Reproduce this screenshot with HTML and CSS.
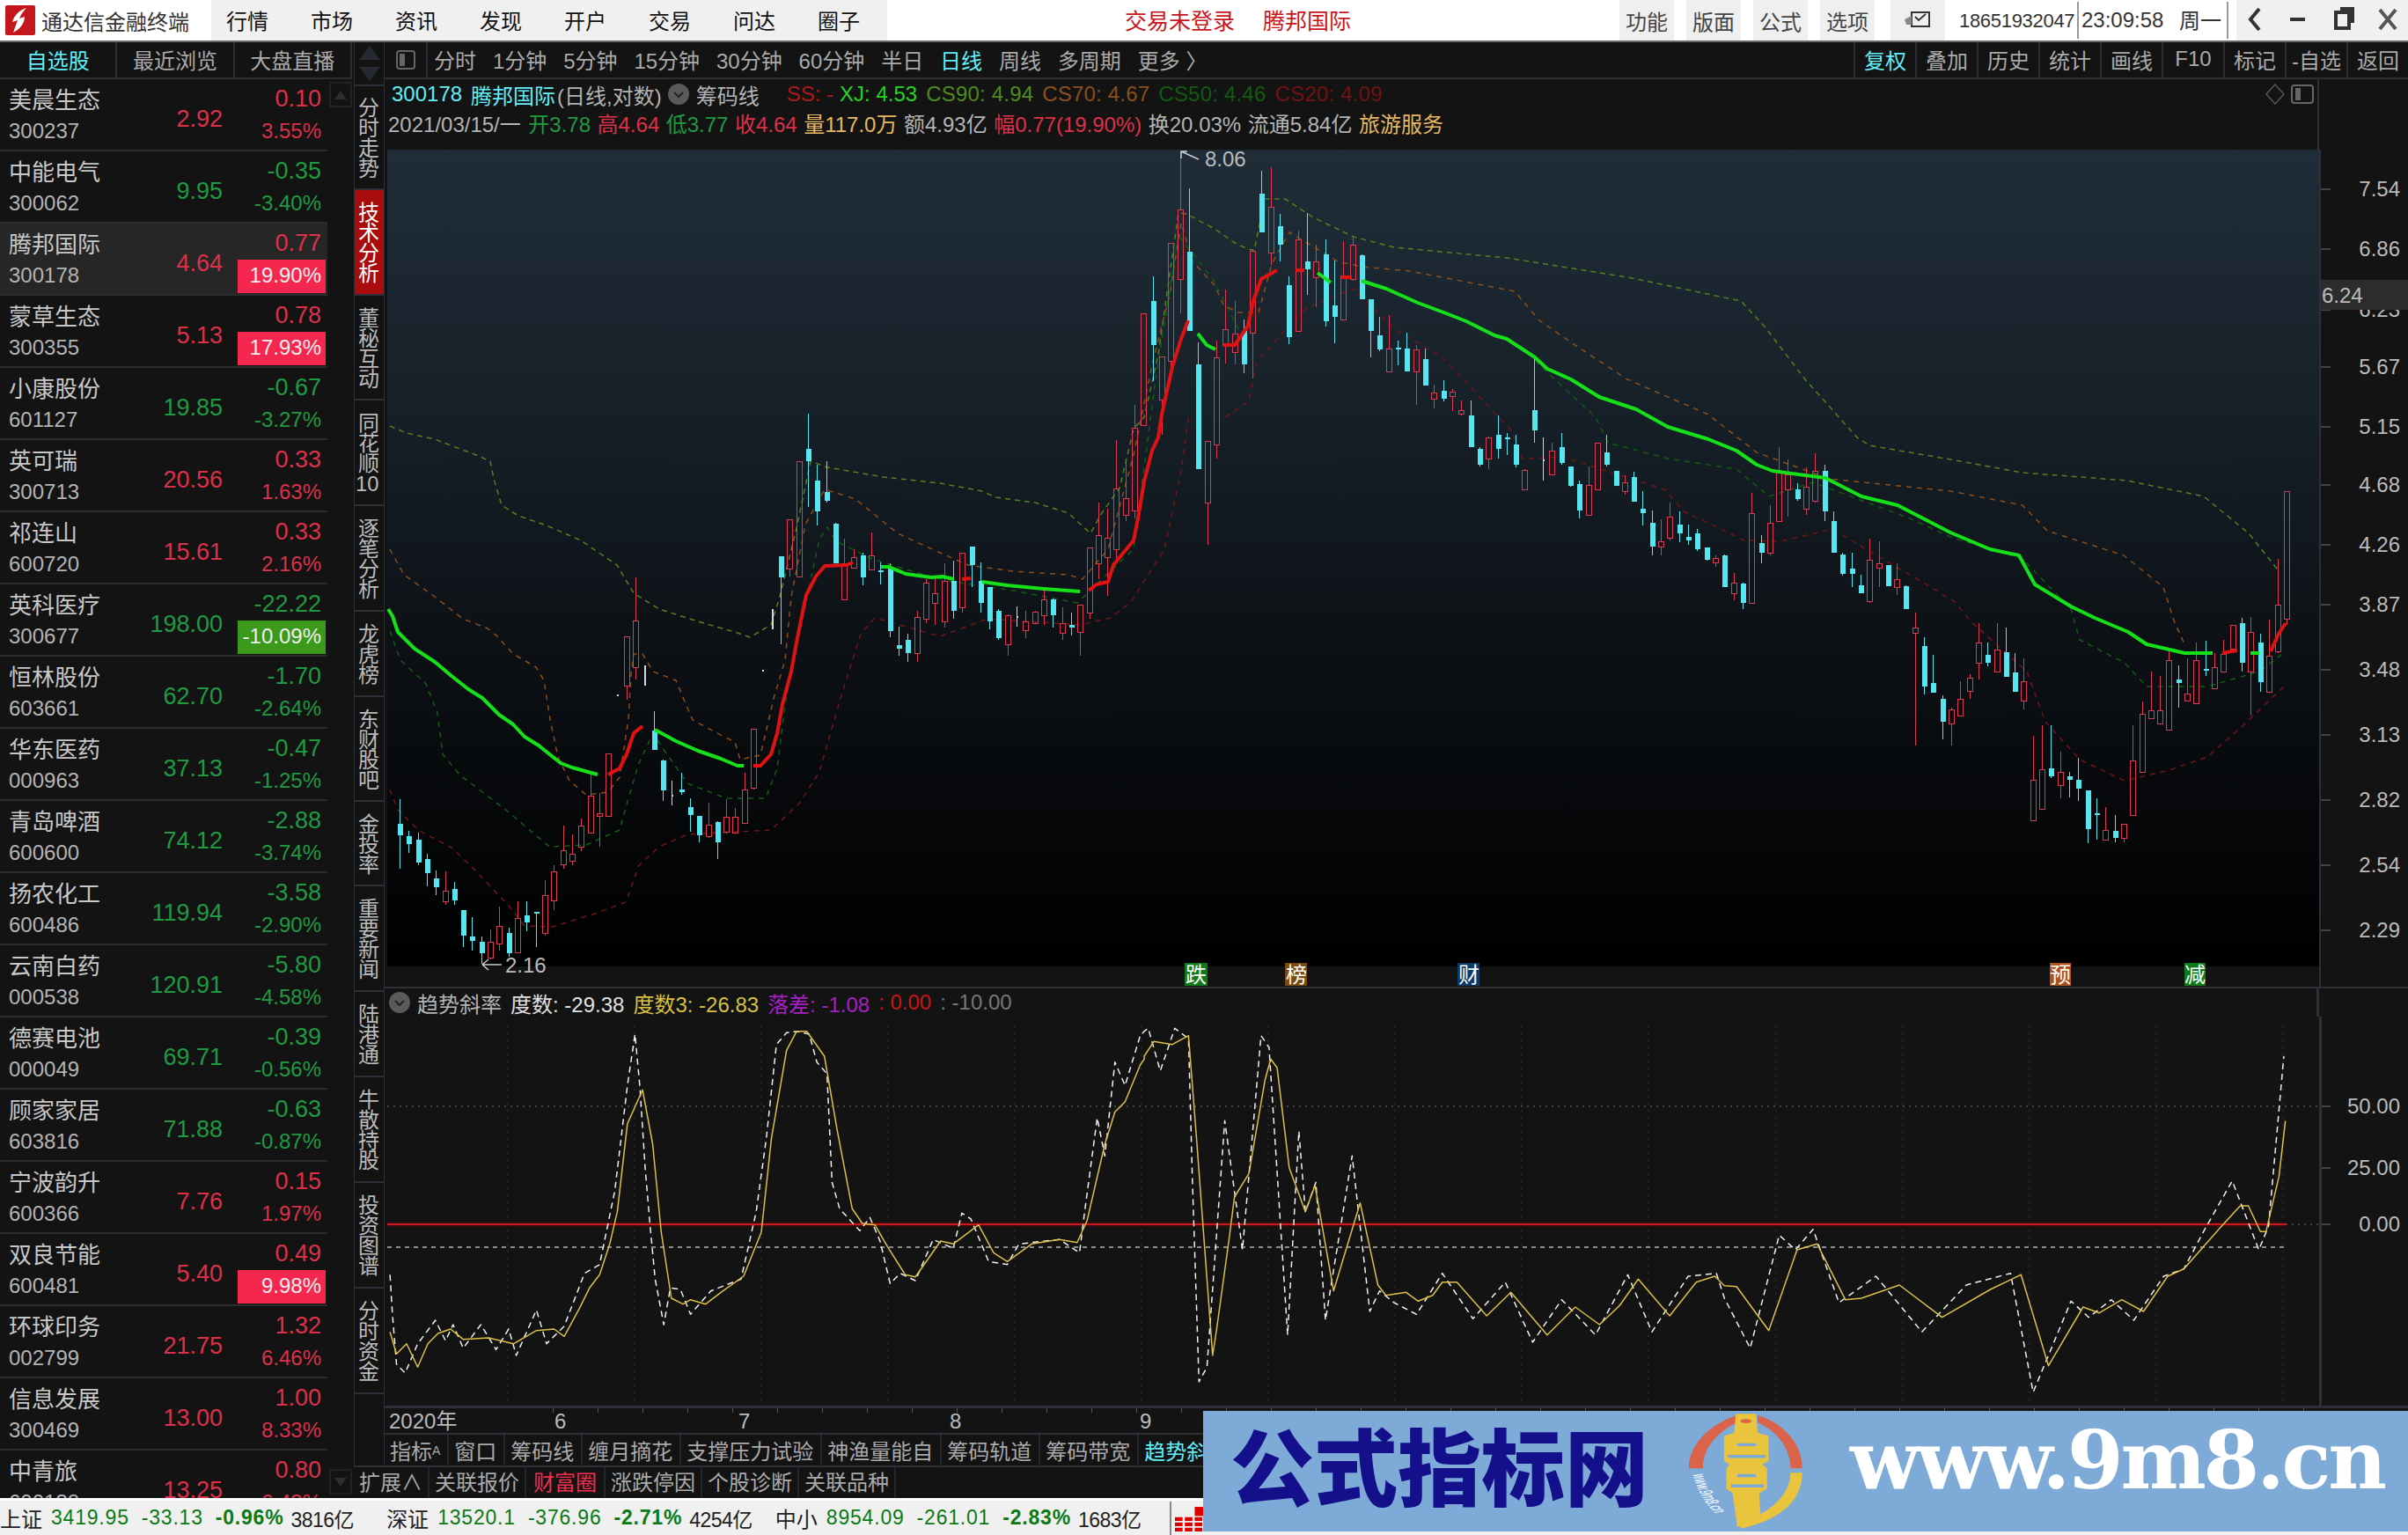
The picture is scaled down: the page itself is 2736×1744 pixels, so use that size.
FILE: index.html
```html
<!DOCTYPE html>
<html lang="zh">
<head>
<meta charset="utf-8">
<title>通达信金融终端</title>
<link rel="stylesheet" href="styles.css">
</head>
<body>
<div class="app">
  <header class="titlebar">
    <div class="brand">
      <svg class="logo" viewBox="0 0 34 34"><rect width="34" height="34" rx="2" fill="#c4161c"/><path d="M24 3 C15 6 10 12 8 19 L14 17 L9 31 C17 27 22 20 22 13 L16 15 C18 10 21 6 24 3Z" fill="#fff"/></svg>
      <span class="brand-name">通达信金融终端</span>
    </div>
    <nav class="menu"><span>行情</span><span>市场</span><span>资讯</span><span>发现</span><span>开户</span><span>交易</span><span>问达</span><span>圈子</span></nav>
    <div class="title-center"><span>交易未登录</span><span>腾邦国际</span></div>
    <div class="tools"><span class="tbtn">功能</span><span class="tbtn">版面</span><span class="tbtn">公式</span><span class="tbtn">选项</span>
      <span class="tbtn mail"><svg width="34" height="26" viewBox="0 0 34 26"><path d="M10 4 H30 V20 H10 Z" fill="none" stroke="#333" stroke-width="2"/><path d="M14 9 L18 13 L26 6" fill="none" stroke="#333" stroke-width="2"/><path d="M2 12 L10 8 V18 H4 Z" fill="#888"/></svg></span>
    </div>
    <div class="clock"><span class="phone">18651932047</span><span class="time">23:09:58</span><span class="week">周一</span></div>
    <div class="winbtns">
      <svg width="195" height="46" viewBox="0 0 195 46"><path d="M26 10 L16 22 L26 34" fill="none" stroke="#333" stroke-width="4"/><rect x="61" y="20" width="17" height="4" fill="#333"/><rect x="113" y="14" width="15" height="18" fill="none" stroke="#333" stroke-width="4"/><path d="M118 10 H132 V26" fill="none" stroke="#333" stroke-width="4"/><path d="M163 11 L181 33 M181 11 L163 33" stroke="#555" stroke-width="4"/></svg>
    </div>
  </header>

  <main class="main">
    <section class="left">
      <div class="ltabs"><span class="on">自选股</span><span>最近浏览</span><span>大盘直播</span></div>
      <div class="listwrap">
        <div class="list">
          <div class="row"><div class="nm"><b>美晨生态</b><i>300237</i></div><div class="px up">2.92</div><div class="ch up"><b>0.10</b><i>3.55%</i></div></div>
          <div class="row"><div class="nm"><b>中能电气</b><i>300062</i></div><div class="px dn">9.95</div><div class="ch dn"><b>-0.35</b><i>-3.40%</i></div></div>
          <div class="row sel"><div class="nm"><b>腾邦国际</b><i>300178</i></div><div class="px up">4.64</div><div class="ch up"><b>0.77</b><i class="box-up">19.90%</i></div></div>
          <div class="row"><div class="nm"><b>蒙草生态</b><i>300355</i></div><div class="px up">5.13</div><div class="ch up"><b>0.78</b><i class="box-up">17.93%</i></div></div>
          <div class="row"><div class="nm"><b>小康股份</b><i>601127</i></div><div class="px dn">19.85</div><div class="ch dn"><b>-0.67</b><i>-3.27%</i></div></div>
          <div class="row"><div class="nm"><b>英可瑞</b><i>300713</i></div><div class="px up">20.56</div><div class="ch up"><b>0.33</b><i>1.63%</i></div></div>
          <div class="row"><div class="nm"><b>祁连山</b><i>600720</i></div><div class="px up">15.61</div><div class="ch up"><b>0.33</b><i>2.16%</i></div></div>
          <div class="row"><div class="nm"><b>英科医疗</b><i>300677</i></div><div class="px dn">198.00</div><div class="ch dn"><b>-22.22</b><i class="box-dn">-10.09%</i></div></div>
          <div class="row"><div class="nm"><b>恒林股份</b><i>603661</i></div><div class="px dn">62.70</div><div class="ch dn"><b>-1.70</b><i>-2.64%</i></div></div>
          <div class="row"><div class="nm"><b>华东医药</b><i>000963</i></div><div class="px dn">37.13</div><div class="ch dn"><b>-0.47</b><i>-1.25%</i></div></div>
          <div class="row"><div class="nm"><b>青岛啤酒</b><i>600600</i></div><div class="px dn">74.12</div><div class="ch dn"><b>-2.88</b><i>-3.74%</i></div></div>
          <div class="row"><div class="nm"><b>扬农化工</b><i>600486</i></div><div class="px dn">119.94</div><div class="ch dn"><b>-3.58</b><i>-2.90%</i></div></div>
          <div class="row"><div class="nm"><b>云南白药</b><i>000538</i></div><div class="px dn">120.91</div><div class="ch dn"><b>-5.80</b><i>-4.58%</i></div></div>
          <div class="row"><div class="nm"><b>德赛电池</b><i>000049</i></div><div class="px dn">69.71</div><div class="ch dn"><b>-0.39</b><i>-0.56%</i></div></div>
          <div class="row"><div class="nm"><b>顾家家居</b><i>603816</i></div><div class="px dn">71.88</div><div class="ch dn"><b>-0.63</b><i>-0.87%</i></div></div>
          <div class="row"><div class="nm"><b>宁波韵升</b><i>600366</i></div><div class="px up">7.76</div><div class="ch up"><b>0.15</b><i>1.97%</i></div></div>
          <div class="row"><div class="nm"><b>双良节能</b><i>600481</i></div><div class="px up">5.40</div><div class="ch up"><b>0.49</b><i class="box-up">9.98%</i></div></div>
          <div class="row"><div class="nm"><b>环球印务</b><i>002799</i></div><div class="px up">21.75</div><div class="ch up"><b>1.32</b><i>6.46%</i></div></div>
          <div class="row"><div class="nm"><b>信息发展</b><i>300469</i></div><div class="px up">13.00</div><div class="ch up"><b>1.00</b><i>8.33%</i></div></div>
          <div class="row"><div class="nm"><b>中青旅</b><i>600138</i></div><div class="px up">13.25</div><div class="ch up"><b>0.80</b><i>6.43%</i></div></div>
        </div>
        <div class="scroll">
          <div class="sbtn"><svg width="20" height="14" viewBox="0 0 20 14"><path d="M10 2 L17 12 H3 Z" fill="#2e2e2e"/></svg></div>
          <div class="sbtn"><svg width="20" height="14" viewBox="0 0 20 14"><path d="M10 12 L17 2 H3 Z" fill="#2e2e2e"/></svg></div>
        </div>
      </div>
    </section>

    <section class="rightwrap">
      <div class="upper">
        <aside class="side">
          <div class="arrows"><svg width="30" height="44" viewBox="0 0 30 44"><path d="M15 2 L27 18 H3 Z" fill="#262a30"/><path d="M15 42 L27 26 H3 Z" fill="#262a30"/></svg></div>
          <div class="vt t118">分时走势</div>
          <div class="vt t120 on">技术分析</div>
          <div class="vt t119">董秘互动</div>
          <div class="vt t120">同花顺<span class="tcy">10</span></div>
          <div class="vt t120">逐笔分析</div>
          <div class="vt t97">龙虎榜</div>
          <div class="vt t119">东财股吧</div>
          <div class="vt t96">金投率</div>
          <div class="vt t120">重要新闻</div>
          <div class="vt t97">陆港通</div>
          <div class="vt t120">牛散持股</div>
          <div class="vt t120">投资图谱</div>
          <div class="vt t120">分时资金</div>
        </aside>
        <div class="content">
          <div class="toolbar">
            <div class="tb-icon"><svg class="panelico" width="22" height="22" viewBox="0 0 22 22"><rect x="1" y="1" width="20" height="20" rx="3" fill="none" stroke="#666" stroke-width="2"/><rect x="4" y="4" width="6" height="14" fill="#666"/></svg></div>
            <div class="periods"><span>分时</span><span>1分钟</span><span>5分钟</span><span>15分钟</span><span>30分钟</span><span>60分钟</span><span>半日</span><span class="cy">日线</span><span>周线</span><span>多周期</span><span>更多 〉</span></div>
            <div class="rtools"><span class="cy">复权</span><span>叠加</span><span>历史</span><span>统计</span><span>画线</span><span>F10</span><span>标记</span><span>-自选</span><span>返回</span></div>
          </div>
          <div class="info">
            <div class="inf inf1">
              <span class="cy">300178</span><span class="cy m1">腾邦国际</span><span class="gr">(日线,对数)</span>
              <svg class="circ" width="24" height="24" viewBox="0 0 24 24"><circle cx="12" cy="12" r="12" fill="#5a5a5a"/><path d="M7 10 L12 15 L17 10" fill="none" stroke="#222" stroke-width="2"/></svg>
              <span class="gr">筹码线</span>
              <span class="c-ss">SS: -</span><span class="c-xj">XJ: 4.53</span><span class="c-90">CS90: 4.94</span><span class="c-70">CS70: 4.67</span><span class="c-50">CS50: 4.46</span><span class="c-20">CS20: 4.09</span>
              <span class="inf-ico"><svg width="56" height="24" viewBox="0 0 56 24"><path d="M12 1 L22 12 L12 23 L2 12 Z" fill="none" stroke="#555" stroke-width="1.5"/><rect x="31" y="2" width="24" height="20" rx="3" fill="none" stroke="#666" stroke-width="2"/><rect x="35" y="5" width="6" height="14" fill="#666"/></svg></span>
            </div>
            <div class="inf inf2">
              <span class="gr">2021/03/15/一</span><span class="dn2 m2">开3.78</span><span class="up2">高4.64</span><span class="dn2">低3.77</span><span class="up2">收4.64</span><span class="am">量117.0万</span><span class="gr">额4.93亿</span><span class="up2">幅0.77(19.90%)</span><span class="gr">换20.03%</span><span class="gr">流通5.84亿</span><span class="am">旅游服务</span>
            </div>
          </div>
          <svg id="price" class="pane" width="2299" height="953" viewBox="437 170 2299 953">
            <defs><linearGradient id="bg" x1="0" y1="0" x2="0" y2="1"><stop offset="0" stop-color="#202d38"/><stop offset=".3" stop-color="#17212a"/><stop offset=".6" stop-color="#0d1116"/><stop offset="1" stop-color="#000"/></linearGradient></defs>
            <rect x="440" y="170" width="2195" height="928" fill="url(#bg)"/>
            <rect x="437" y="1121" width="2299" height="2" fill="#2d3038"/>
            <rect x="2635" y="170" width="2" height="953" fill="#2d3038"/>
            <g id="pdash"></g><g id="pcandles"></g><g id="pma"></g>
            <path d="M1342 172 L1362 181 M1342 172 L1342 180 M1342 172 L1349 172" class="note"/>
            <text x="1369" y="189" class="lbl">8.06</text>
            <path d="M548 1096 H570 M548 1096 L555 1090 M548 1096 L555 1102" class="note"/>
            <text x="574" y="1105" class="lbl">2.16</text>
            <g class="tags">
              <rect x="1346" y="1094" width="26" height="26" fill="#0f7a1a"/><text x="1347" y="1116">跌</text>
              <rect x="1460" y="1094" width="25" height="26" fill="#7a4a10"/><text x="1461" y="1116">榜</text>
              <rect x="1656" y="1094" width="25" height="26" fill="#0d3a66"/><text x="1657" y="1116">财</text>
              <rect x="2329" y="1094" width="24" height="26" fill="#b0501c"/><text x="2329" y="1116">预</text>
              <rect x="2482" y="1094" width="24" height="26" fill="#0f7a1a"/><text x="2482" y="1116">减</text>
            </g>
            <g class="axis">
              <text x="2727" y="223">7.54</text><text x="2727" y="291">6.86</text><text x="2727" y="360">6.23</text><text x="2727" y="425">5.67</text><text x="2727" y="493">5.15</text><text x="2727" y="559">4.68</text><text x="2727" y="627">4.26</text><text x="2727" y="695">3.87</text><text x="2727" y="769">3.48</text><text x="2727" y="843">3.13</text><text x="2727" y="917">2.82</text><text x="2727" y="991">2.54</text><text x="2727" y="1065">2.29</text>
            </g>
            <g id="pticks"></g>
            <rect x="2637" y="318" width="99" height="34" fill="#2c2c2e"/>
            <text x="2638" y="344" class="lbl">6.24</text>
          </svg>
          <div class="indhead">
            <svg width="24" height="24" viewBox="0 0 24 24"><circle cx="12" cy="12" r="12" fill="#5a5a5a"/><path d="M7 10 L12 15 L17 10" fill="none" stroke="#222" stroke-width="2"/></svg>
            <span class="gr">趋势斜率</span><span class="wh">度数: -29.38</span><span class="yl">度数3: -26.83</span><span class="pu">落差: -1.08</span><span class="rd">: 0.00</span><span class="g2">: -10.00</span>
          </div>
          <svg id="ind" class="pane" width="2299" height="475" viewBox="437 1155 2299 475">
            <rect x="2635" y="1155" width="3" height="445" fill="#2d3038"/>
            <g id="igrid"></g>
            <path d="M440 1417 H2597" class="zero"/>
            <path d="M440 1391 H2597" class="rline-h"/>
            <path d="M440 1391 H2597" class="rline"/>
            <g id="ilines"></g>
            <g class="axis"><text x="2727" y="1265">50.00</text><text x="2727" y="1335">25.00</text><text x="2727" y="1399">0.00</text></g>
            <rect x="437" y="1597" width="2299" height="3" fill="#2d3038"/>
            <rect x="437" y="1628" width="2299" height="2" fill="#2d3038"/>
            <g id="xticks"></g>
            <g class="xlab"><text x="442" y="1623">2020年</text><text x="630" y="1623">6</text><text x="839" y="1623">7</text><text x="1079" y="1623">8</text><text x="1295" y="1623">9</text></g>
          </svg>
          <div class="subtabs"><span>指标<small>A</small></span><span>窗口</span><span>筹码线</span><span>缠月摘花</span><span>支撑压力试验</span><span>神渔量能自</span><span>筹码轨道</span><span>筹码带宽</span><span class="cy">趋势斜率</span></div>
        </div>
      </div>
      <div class="ext"><span>扩展∧</span><span>关联报价</span><span class="hot">财富圈</span><span>涨跌停因</span><span>个股诊断</span><span>关联品种</span></div>
    </section>
  </main>

  <footer class="status">
    <div class="grp g1"><span class="k">上证</span><span class="v">3419.95</span><span class="v">-33.13</span><strong class="v">-0.96%</strong><span class="a">3816亿</span></div>
    <div class="grp g2nd"><span class="k">深证</span><span class="v">13520.1</span><span class="v">-376.96</span><strong class="v">-2.71%</strong><span class="a">4254亿</span></div>
    <div class="grp"><span class="k">中小</span><span class="v">8954.09</span><span class="v">-261.01</span><strong class="v">-2.83%</strong><span class="a">1683亿</span></div>
    <svg class="sticon" width="44" height="38" viewBox="0 0 44 38"><rect x="26" y="4" width="18" height="12" fill="#d00"/><path d="M0 20 H44 M0 27 H44 M0 34 H44" stroke="#d00" stroke-width="5" stroke-dasharray="10 3"/></svg>
  </footer>

  <div class="banner">
    <span class="wm-cn">公式指标网</span>
    <svg class="wm-logo" width="151" height="137" viewBox="640 130 170 410" preserveAspectRatio="none">
      <path d="M650 325 C650 240 680 170 712 145 L712 170 C690 195 668 250 668 325 Z M795 325 C795 240 770 170 738 145 L738 170 C760 195 780 250 780 325 Z" fill="#da634a"/>
      <path d="M795 340 C795 430 770 500 716 530 L716 505 C750 485 780 420 780 340 Z" fill="#e9c43c"/>
      <path d="M710 140 H736 L738 205 L752 215 V300 L744 312 L750 325 V395 L740 410 L742 500 L712 525 L706 410 L698 395 V325 L702 312 L695 300 V215 L708 205 Z" fill="#e9c43c"/>
      <path d="M712 240 H736 V250 H712 Z M700 280 H748 V290 H700 Z M712 345 H736 V355 H712 Z M704 380 H746 V390 H704 Z" fill="#7eaad8"/>
      <circle cx="723" cy="165" r="7" fill="#da634a"/>
      <path id="wmarc" d="M655 345 C662 420 680 480 705 525" fill="none"/>
      <text class="wm-mini"><textPath href="#wmarc">www.9m8.cn</textPath></text>
    </svg>
    <span class="wm-en">www.9m8.cn</span>
  </div>
</div>
<script src="app.js"></script>
</body>
</html>
```
FILE: styles.css
```css
* { box-sizing: border-box; }
html, body { margin: 0; padding: 0; background: #131313; }
body { font-family: "Liberation Sans", "Noto Sans CJK SC", sans-serif; font-size: 24px; color: #aaa; overflow: hidden; }
.app { position: relative; width: 2736px; height: 1744px; display: flex; flex-direction: column; }
.cy { color: #62eef8; }
.gr { color: #b4b4b4; }

/* title bar */
.titlebar { height: 48px; flex: none; background: #fff; border-bottom: 2px solid #6a6a6a; display: flex; color: #000; }
.brand { width: 240px; display: flex; align-items: center; padding-left: 6px; gap: 7px; }
.logo { width: 34px; height: 34px; }
.brand-name { font-size: 24px; color: #333; white-space: nowrap; }
.menu { width: 768px; background: #f0f0f0; display: flex; padding-left: 17px; gap: 48px; align-items: center; padding-bottom: 2px; font-size: 24px; color: #111; }
.title-center { width: 832px; display: flex; gap: 32px; padding-left: 270px; align-items: center; padding-bottom: 2px; color: #c8141c; font-size: 25px; }
.tools { display: flex; gap: 14px; margin-right: 16px; }
.tbtn { width: 62px; background: #efefef; display: flex; align-items: center; justify-content: center; font-size: 24px; color: #444; }
.mail { margin-left: 4px; }
.clock { width: 315px; display: flex; align-items: center; color: #333; }
.phone { font-size: 22px; letter-spacing: -.3px; width: 136px; padding-right: 4px; border-right: 2px solid #999; height: 42px; line-height: 44px; white-space: nowrap; }
.time { font-size: 24px; padding-left: 3px; width: 114px; white-space: nowrap; }
.week { width: 56px; height: 42px; line-height: 44px; border-right: 2px solid #999; }
.winbtns { width: 195px; background: #f0f0f0; height: 46px; margin-left: auto; }
.winbtns svg { display: block; }

/* layout */
.main { flex: none; height: 1654px; display: flex; }
.left { width: 402px; flex: none; display: flex; flex-direction: column; }
.ltabs { height: 42px; flex: none; display: flex; border-bottom: 2px solid #2c2e32; width: 400px; }
.ltabs span { width: 133.3px; display: flex; align-items: center; justify-content: center; padding-bottom: 2px; font-size: 24px; color: #aaa; border-right: 2px solid #2c2e32; }
.ltabs .on { color: #62eef8; }
.listwrap { flex: 1; display: flex; overflow: hidden; min-height: 0; }
.list { width: 372px; flex: none; }
.row { height: 82px; width: 372px; border-bottom: 2px solid #2c2c2e; display: grid; grid-template-columns: 168px 85px 119px; }
.row.sel { background: #262626; }
.nm { display: flex; flex-direction: column; padding-left: 10px; }
.nm b { font-weight: 400; font-size: 26px; color: #c8c8c8; height: 46px; line-height: 49px; white-space: nowrap; }
.nm i { font-style: normal; font-size: 24px; color: #b4b4b4; line-height: 26px; }
.px { font-size: 27px; text-align: right; align-self: center; margin-top: 10px; }
.ch { display: flex; flex-direction: column; align-items: flex-end; padding-right: 7px; }
.ch b { font-weight: 400; font-size: 27px; height: 41px; line-height: 44px; }
.ch i { font-style: normal; font-size: 24px; width: 100px; height: 38px; line-height: 36px; text-align: right; margin-right: -5px; padding-right: 5px; }
.up { color: #dd3049; }
.dn { color: #1f9a42; }
i.box-up { background: #f5274f; color: #eee; }
i.box-dn { background: #3b9a1b; color: #eee; }
.scroll { width: 28px; flex: none; margin-left: 2px; padding-top: 3px; display: flex; flex-direction: column; justify-content: space-between; padding-bottom: 4px; }
.sbtn { width: 26px; height: 29px; border: 2px solid #222; display: flex; align-items: center; justify-content: center; }

.rightwrap { flex: 1; display: flex; flex-direction: column; min-width: 0; }
.upper { height: 1617px; display: flex; flex: none; }
.side { width: 35px; flex: none; display: flex; flex-direction: column; border-left: 1px solid #2c2e32; border-right: 1px solid #2c2e32; }
.arrows { height: 50px; border-bottom: 2px solid #2d3038; display: flex; align-items: center; justify-content: center; }
.vt { writing-mode: vertical-rl; text-orientation: upright; font-size: 24px; line-height: 33px; color: #bbb; border-bottom: 2px solid #2d3038; display: flex; align-items: center; justify-content: center; padding-right: 5px; letter-spacing: -1px; white-space: nowrap; }
.tcy { text-combine-upright: all; }
.vt.on { background: #a80c0c; color: #fff; }
.t96 { height: 96px; } .t97 { height: 97px; } .t118 { height: 118px; } .t119 { height: 119px; } .t120 { height: 120px; }

.content { flex: 1; min-width: 0; display: flex; flex-direction: column; }
.toolbar { height: 42px; flex: none; display: flex; border-bottom: 2px solid #2c2e32; }
.tb-icon { width: 49px; border-right: 2px solid #2c2e32; display: flex; align-items: center; justify-content: center; }
.periods { display: flex; gap: 18.9px; align-items: center; padding-left: 7px; padding-bottom: 2px; color: #aaa; white-space: nowrap; }
.rtools { margin-left: auto; display: flex; }
.rtools span { width: 70px; border-left: 2px solid #2c2e32; display: flex; align-items: center; justify-content: center; padding-bottom: 2px; white-space: nowrap; color: #aaa; }
.rtools .cy { color: #62eef8; }
.info { height: 80px; flex: none; width: 2198px; border-right: 2px solid #2d3038; display: flex; flex-direction: column; padding-top: 1px; }
.inf { display: flex; align-items: center; white-space: nowrap; height: 32px; }
.inf1 { padding-left: 8px; gap: 10px; }
.inf1 .m1 { margin-right: -8px; }
.circ { margin-left: -3px; margin-right: -2px; }
.c-ss { color: #b01818; margin-left: 21px; margin-right: -3px; }
.c-xj { color: #22d622; }
.c-90 { color: #4e8a1e; letter-spacing: .2px; }
.c-70 { color: #8a4f1a; letter-spacing: .2px; }
.c-50 { color: #0f5c0f; letter-spacing: .2px; }
.c-20 { color: #6e1212; letter-spacing: .2px; }
.inf-ico { margin-left: auto; margin-right: 4px; display: flex; }
.inf2 { padding-left: 4px; gap: 7.5px; }
.m2 { margin-left: 1px; }
.dn2 { color: #1f9a42; }
.up2 { color: #dd3049; }
.am { color: #e8b860; }
.pane { display: block; flex: none; }
.lbl { fill: #bbb; font-size: 24px; }
.note { fill: none; stroke: #ccc; stroke-width: 1.5; }
.tags text { fill: #fff; font-size: 24px; }
.axis text { fill: #bbb; font-size: 24px; text-anchor: end; }
.xlab text { fill: #bbb; font-size: 24px; }
.indhead { height: 32px; flex: none; width: 2198px; border-right: 3px solid #2d3038; display: flex; align-items: center; gap: 10px; padding-left: 5px; white-space: nowrap; }
.indhead .gr { margin-left: -2px; }
.wh { color: #e0e0e0; } .yl { color: #d8c040; } .pu { color: #a420c4; } .rd { color: #c81414; } .g2 { color: #777; }
.zero { stroke: #8a8a8a; stroke-width: 2; stroke-dasharray: 5 5; fill: none; }
.rline { stroke: #c81a1e; stroke-width: 2; fill: none; }
.rline-h { stroke: #3a0c0c; stroke-width: 5; fill: none; }
.subtabs { height: 35px; flex: none; display: flex; align-items: center; background: #131313; white-space: nowrap; color: #aaa; }
.subtabs span { height: 100%; display: flex; align-items: center; padding: 0 8px 0 6px; border-right: 2px solid #24262a; }
.subtabs small { font-size: 14px; }
.ext { height: 37px; flex: none; display: flex; align-items: center; white-space: nowrap; border-top: 2px solid #2d3038; }
.ext span { height: 100%; display: flex; align-items: center; padding: 0 6px 4px; border-right: 2px solid #24262a; color: #aaa; }
.ext .hot { color: #f0304e; padding: 0 8px 4px; }

/* status */
.status { height: 42px; flex: none; background: #f0f0f0; border-top: 3px solid #fff; display: flex; align-items: center; font-size: 24px; color: #222; white-space: nowrap; }
.grp { display: flex; gap: 14px; align-items: center; margin-right: 26px; }
.g1 { margin-right: 37px; }
.grp .k { margin-right: -4px; }
.grp .v { color: #0a7a14; font-size: 23px; letter-spacing: .8px; }
.grp .a { font-size: 23px; margin-left: -6px; letter-spacing: -.5px; }
.sticon { margin-left: 6px; border-left: 2px solid #888; padding-left: 4px; }

/* watermark */
.banner { position: absolute; left: 1367px; top: 1603px; width: 1369px; height: 137px; background: #7eaad8; display: flex; align-items: center; overflow: hidden; }
.wm-cn { font-family: "Noto Sans CJK SC", sans-serif; font-weight: 900; font-size: 95px; color: #14108c; margin-left: 31px; white-space: nowrap; line-height: 119px; padding-bottom: 18px; width: 512px; flex: none; }
.wm-logo { flex: none; }
.wm-mini { fill: #fff; font-size: 24px; }
.wm-en { font-family: "DejaVu Serif", serif; font-weight: 700; font-size: 92px; color: #fff; letter-spacing: -3.4px; margin-left: 41px; white-space: nowrap; line-height: 113px; padding-bottom: 24px; }
```
FILE: app.js
```js
var NS = 'http://www.w3.org/2000/svg';
function el(parent, tag, attrs) {
  var e = document.createElementNS(NS, tag);
  for (var k in attrs) e.setAttribute(k, attrs[k]);
  parent.appendChild(e);
  return e;
}
function poly(parent, pts, color, width, dash) {
  var a = { points: pts.map(function (p) { return p[0].toFixed(1) + ',' + p[1].toFixed(1); }).join(' '), fill: 'none', stroke: color, 'stroke-width': width, 'stroke-linejoin': 'round' };
  if (dash) a['stroke-dasharray'] = dash;
  el(parent, 'polyline', a);
}

/* candles: colour, high, body top, body bottom, low */
var C = [
"c 908 936 949 987","c 944 950 959 969","c 946 954 980 983","c 970 976 992 1007","c 989 998 1008 1017","r 990 1012 1024 1028","c 1002 1010 1023 1028","c 1034 1034 1063 1076","c 1042 1064 1069 1080","c 1064 1070 1083 1095",
"r 1056 1070 1088 1090","r 1030 1052 1072 1080","c 1054 1060 1083 1087","r 1024 1043 1082 1083","c 1024 1040 1048 1058","c 1036 1036 1038 1076","r 1000 1017 1060 1063","r 983 990 1023 1034","r 938 966 982 987","r 948 970 978 983",
"r 930 938 962 967","r 880 904 946 946","r 901 924 927 962","r 856 856 927 927","w 789 789 791 791","r 723 723 779 795","r 656 705 758 772","w 756 756 779 779","c 808 830 852 852","c 863 864 898 910",
"w 887 903 904 915","c 878 897 900 903","c 907 917 926 945","c 927 927 949 957","r 912 937 950 952","c 933 934 957 976","r 908 928 945 947","r 918 928 946 947","r 878 897 935 936","r 828 828 895 897",
"w 761 761 763 763","w 692 692 715 715","c 632 632 656 732","r 590 590 646 655","r 524 524 655 655","c 470 510 524 576","c 528 546 581 597","c 524 559 569 571","c 594 595 640 640","r 612 640 681 681",
"r 624 633 645 646","c 628 631 656 665","r 605 631 647 647","c 639 648 650 664","c 640 646 717 724","c 712 733 737 745","c 720 727 742 752","r 694 701 742 752","r 658 662 703 708","r 656 674 685 710",
"r 640 660 706 713","c 637 660 694 703","r 628 628 690 696","c 621 621 642 667","c 639 660 685 696","c 667 667 706 715","c 692 694 725 727","r 698 699 732 745","w 689 700 702 712","r 694 706 716 725",
"r 694 695 708 707","r 671 681 699 710","c 680 681 699 713","r 690 708 719 727","c 696 710 713 722","r 687 687 718 745","r 622 622 696 703","r 571 608 640 658","r 578 611 633 677","r 500 555 624 639",
"r 524 566 585 592","r 460 486 580 589","r 356 356 483 483","c 314 342 392 433","r 405 405 454 494","r 276 276 410 424","r 171 238 317 356","c 214 286 376 376","c 389 414 533 533","r 501 501 571 619",
"r 387 406 505 521","r 329 374 392 413","r 342 379 400 414","c 363 376 414 424","r 283 285 378 430","c 194 220 264 264","r 190 235 287 301","c 243 257 278 297","c 314 324 383 391","r 262 272 376 376",
"c 242 297 306 335","r 278 297 315 349","c 272 289 365 371","c 296 347 360 390","r 274 313 363 364","r 269 278 317 319","c 289 290 340 340","c 340 340 376 406","c 360 381 397 399","r 358 396 422 422",
"c 387 395 397 415","c 378 396 422 422","r 392 397 422 460","c 396 408 438 438","r 437 446 453 464","c 432 444 453 456","r 442 445 450 467","r 455 466 470 472","c 455 472 508 508","c 508 510 528 530",
"r 496 497 521 533","c 472 494 510 521","c 492 497 499 517","c 494 505 528 531","r 533 534 556 556","c 406 466 489 503","w 497 522 524 546","r 503 512 539 540","c 492 508 526 528","c 530 530 552 553",
"c 546 550 580 589","r 530 551 585 586","r 503 503 556 556","c 494 514 528 530","c 535 535 552 552","r 540 548 558 562","c 536 542 570 570","c 558 578 583 597","c 580 594 621 631","r 590 615 621 631",
"r 571 587 611 614","c 581 596 606 616","c 596 610 614 619","c 601 606 624 626","c 622 622 636 637","r 631 634 639 644","c 630 631 667 667","r 651 662 674 682","c 662 663 685 692","r 560 583 685 685",
"c 608 617 628 640","r 574 594 628 631","r 508 535 592 592","r 522 539 556 587","c 549 556 567 569","r 531 553 578 585","r 515 535 569 571","c 528 535 581 592","c 581 592 628 628","c 628 630 652 654",
"c 628 646 652 667","c 653 665 674 674","r 612 636 683 685","r 615 640 645 667","c 642 642 666 666","r 640 658 667 676","c 665 666 692 692","r 696 713 719 847","c 724 734 780 789","c 744 776 787 787",
"c 790 794 820 840","r 804 806 822 847","r 774 794 813 814","r 766 770 785 794","r 708 730 753 772","c 730 744 753 757","r 708 738 763 763","c 713 741 769 769","c 742 764 786 786","r 748 774 796 806",
"r 836 886 932 932","r 824 874 919 919","c 824 873 882 884","r 854 877 892 907","c 877 882 886 906","c 861 886 896 910","c 898 898 942 958","c 907 924 926 954","r 917 943 954 954","c 926 944 952 957",
"r 936 936 952 957","r 824 864 926 926","r 797 811 877 878","r 763 807 816 816","r 768 807 822 822","r 740 750 829 829","c 756 772 776 804","r 748 788 796 796","r 730 750 799 799","c 728 760 762 768",
"r 742 758 782 782","r 727 743 763 764","r 710 710 737 737","c 702 708 753 763","r 701 718 763 813","c 720 730 775 786","r 704 745 786 786","r 635 687 740 742","r 558 558 703 710"];

var RED = '#e03850', CYAN = '#55e6f2', WHITE = '#d8d8d8';
var gC = document.getElementById('pcandles');
gC.setAttribute('shape-rendering', 'crispEdges');
C.forEach(function (s, i) {
  var p = s.split(' '), c = p[0], h = +p[1], t = +p[2], b = +p[3], l = +p[4];
  var x = Math.round(454 + 10.31 * i);
  var col = c === 'r' ? RED : c === 'c' ? CYAN : WHITE;
  var d = 'M' + (x + .5) + ' ' + h + 'V' + t + 'M' + (x + .5) + ' ' + b + 'V' + l;
  el(gC, 'path', { d: d, stroke: col, 'stroke-width': 1, fill: 'none' });
  if (c === 'r') el(gC, 'rect', { x: x - 3 + .5, y: t + .5, width: 6, height: Math.max(b - t, 1), fill: 'none', stroke: col, 'stroke-width': 1 });
  else if (c === 'c') el(gC, 'rect', { x: x - 2, y: t, width: 6, height: Math.max(b - t, 2), fill: col });
  else el(gC, 'rect', { x: x, y: t, width: 2, height: Math.max(b - t, 2), fill: col });
});

/* moving line: alternating coloured runs */
var GREEN = '#16e01a', MARED = '#e21212';
var MA = [
[GREEN, [[441,692],[446,700],[452,718],[471,737],[494,752],[513,768],[532,783],[548,793],[567,812],[583,823],[596,837],[612,847],[637,867],[650,872],[679,880]]],
[MARED, [[691,880],[704,873],[712,857],[720,833],[730,825]]],
[GREEN, [[744,829],[768,842],[793,853],[819,862],[838,870],[845,870]]],
[MARED, [[856,870],[864,870],[876,857],[883,833],[889,800],[899,763],[905,730],[911,700],[916,676],[927,655],[937,643],[962,642],[969,639]]],
[GREEN, [[1001,644],[1010,644],[1029,652],[1058,656],[1071,655],[1084,658]]],
[MARED, [[1093,658],[1103,657]]],
[GREEN, [[1116,661],[1144,665],[1186,669],[1227,672]]],
[MARED, [[1237,671],[1246,664],[1259,661],[1265,642],[1288,614],[1293,589],[1300,547],[1309,512],[1316,497],[1320,471],[1332,417],[1342,385],[1350,364]]],
[GREEN, [[1361,379],[1371,392],[1381,397]]],
[MARED, [[1390,392],[1403,392],[1418,370],[1424,342],[1433,317],[1451,307]]],
[MARED, [[1472,307],[1482,307]]],
[GREEN, [[1497,310],[1512,321]]],
[MARED, [[1524,315],[1536,315]]],
[GREEN, [[1547,319],[1575,328],[1611,344],[1643,356],[1666,365],[1698,381],[1712,385],[1744,406],[1758,419],[1785,431],[1817,451],[1859,465],[1895,485],[1941,499],[1973,512],[1996,528],[2014,535],[2074,543],[2115,564],[2156,574],[2216,605],[2261,624],[2294,631],[2312,664],[2353,689],[2380,702],[2418,718],[2439,732],[2465,738],[2482,742],[2514,742]]],
[MARED, [[2525,742],[2542,739]]],
[GREEN, [[2557,742],[2567,742]]],
[MARED, [[2580,740],[2589,720],[2597,708]]]
];
var gM = document.getElementById('pma');
MA.forEach(function (m) { poly(gM, m[1], m[0], 4); });

/* chip-distribution dashed curves */
var D = document.getElementById('pdash');
poly(D, [[443,484],[462,492],[494,499],[541,517],[557,524],[561,544],[570,574],[589,586],[621,597],[660,614],[701,642],[720,674],[749,692],[793,706],[838,719],[852,724],[876,710],[886,678],[905,600],[921,524],[940,531],[1004,542],[1068,549],[1116,558],[1131,565],[1176,571],[1214,583],[1239,606],[1253,581],[1272,555],[1288,487],[1300,474],[1316,403],[1339,242],[1348,243],[1380,260],[1406,278],[1425,285],[1437,226],[1460,226],[1492,247],[1538,269],[1584,281],[1712,293],[1849,315],[1978,342],[2005,371],[2051,431],[2110,497],[2124,506],[2216,522],[2298,537],[2417,546],[2504,564],[2555,606],[2587,646]], '#55801e', 1.5, '6 5');
poly(D, [[443,624],[459,653],[494,678],[526,703],[554,714],[564,722],[583,743],[609,758],[618,773],[625,817],[634,860],[647,887],[666,903],[691,900],[704,883],[714,817],[717,767],[720,743],[730,743],[742,763],[768,773],[778,797],[787,818],[813,832],[835,843],[841,863],[864,858],[880,790],[892,750],[899,678],[915,596],[937,556],[972,567],[994,585],[1020,606],[1068,628],[1100,642],[1151,649],[1214,653],[1230,658],[1259,624],[1288,517],[1310,410],[1329,335],[1342,253],[1355,297],[1380,324],[1390,346],[1406,355],[1430,355],[1445,300],[1465,264],[1520,297],[1547,303],[1602,308],[1721,331],[1749,364],[1785,389],[1849,431],[1941,471],[1996,514],[2078,544],[2216,558],[2298,574],[2326,603],[2413,631],[2458,667],[2470,705],[2482,732]], '#8a4f1a', 1.5, '6 6');
poly(D, [[443,717],[455,750],[484,777],[497,810],[503,857],[522,880],[577,922],[624,962],[666,960],[704,943],[714,907],[726,867],[742,833],[755,853],[781,890],[825,907],[870,907],[883,873],[892,800],[905,733],[931,613],[940,599],[950,615],[991,635],[1036,649],[1077,660],[1151,671],[1224,685],[1288,624],[1313,431],[1339,267],[1380,320],[1420,400]], '#135c13', 1.5, '6 6');
poly(D, [[1744,410],[1813,474],[1827,503],[1895,521],[1973,533],[2010,564],[2060,548],[2170,589],[2216,610],[2298,635],[2353,692],[2363,727],[2414,753],[2439,780],[2508,780],[2567,763],[2597,740]], '#135c13', 1.5, '6 6');
poly(D, [[443,897],[452,920],[475,943],[513,963],[538,987],[577,1028],[596,1052],[628,1053],[679,1037],[711,1025],[726,983],[749,962],[781,948],[838,945],[876,943],[908,913],[931,877],[956,790],[978,720],[994,702],[1068,723],[1122,703],[1227,710],[1262,702],[1285,684],[1323,624],[1342,535],[1351,471]], '#701616', 1.5, '6 6');
poly(D, [[1392,474],[1419,456],[1428,410],[1483,351],[1538,328],[1584,374],[1639,406],[1666,435],[1717,489],[1730,521],[1776,519],[1840,540],[1891,556],[1913,581],[1982,614],[2023,615],[2083,601],[2115,621],[2170,653],[2220,683],[2239,706],[2303,763],[2324,820],[2363,863],[2414,887],[2465,875],[2508,860],[2550,823],[2595,780]], '#701616', 1.5, '6 6');

/* axis ticks */
var tk = document.getElementById('pticks');
[215,283,352,417,485,551,619,687,761,835,909,983,1057].forEach(function (y) {
  el(tk, 'rect', { x: 2637, y: y - 1, width: 11, height: 2, fill: '#444' });
});

/* indicator */
function z6(a) { return a.map(function (p) { return [400 + p[0] / 1.742, 1060 + p[1] / 3]; }); }
function z11(a) { return a.map(function (p) { return [1300 + p[0] / 1.092, 1110 + p[1] / 3]; }); }
var Y = z6([[75,1360],[88,1435],[108,1400],[130,1480],[150,1400],[170,1365],[195,1350],[220,1385],[270,1380],[320,1400],[365,1355],[400,1350],[420,1375],[450,1280],[470,1210],[490,1165],[510,1060],[525,950],[545,650],[575,535],[595,720],[612,1020],[632,1245],[655,1265],[670,1250],[700,1265],[730,1225],[775,1170],[810,1020],[830,700],[860,400],[880,335],[900,335],[935,420],[960,670],[990,940],[1010,990],[1035,995],[1060,1070],[1095,1165],[1115,1172],[1165,1050],[1190,1060],[1240,995],[1270,1090],[1297,1120],[1345,1060],[1400,1045],[1435,1055],[1455,980],[1490,720],[1510,610],[1530,575],[1560,450],[1568,430]]).concat(
z11([[0,270],[12,220],[35,230],[55,200],[65,550],[85,1290],[90,1200],[105,900],[112,750],[130,670],[150,350],[157,280],[165,310],[180,650],[200,800],[212,710],[235,1070],[268,770],[290,1050],[300,1085],[325,1075],[340,1105],[358,1085],[370,1040],[388,1040],[425,1155],[455,1075],[500,1220],[535,1125],[565,1185],[590,1120],[613,1030],[652,1155],[685,1040],[708,1020],[720,1052],[735,1055],[775,1205],[810,930],[835,910],[870,1100],[890,1095],[937,1050],[990,1160],[1050,1065],[1088,1015],[1122,1325],[1165,1125],[1185,1145],[1213,1100],[1240,1140],[1270,1020],[1290,995],[1335,855],[1360,780],[1370,780],[1385,868],[1392,868],[1408,680],[1416,490]]));
var W = z6([[75,1165],[80,1300],[88,1470],[105,1500],[130,1400],[165,1320],[185,1390],[200,1335],[220,1415],[255,1335],[285,1420],[310,1350],[325,1440],[365,1285],[385,1400],[420,1340],[460,1160],[490,1130],[520,880],[545,520],[560,345],[570,530],[580,800],[590,1000],[600,1180],[617,1335],[630,1210],[650,1215],[670,1300],[710,1220],[770,1180],[800,950],[820,700],[840,380],[860,340],[880,335],[905,345],[920,440],[940,480],[950,850],[965,940],[1005,1015],[1025,970],[1045,1050],[1065,1195],[1085,1160],[1115,1185],[1150,1045],[1190,1075],[1207,955],[1225,975],[1260,1120],[1297,1130],[1320,1060],[1400,1045],[1440,1090],[1450,950],[1475,630],[1490,760],[1510,440],[1530,520],[1560,350],[1568,335]]).concat(
z11([[5,175],[20,320],[38,175],[55,210],[60,700],[68,1380],[78,1330],[100,490],[122,930],[145,200],[155,240],[178,1220],[192,525],[200,800],[213,700],[225,1170],[258,610],[280,1140],[292,1070],[310,1110],[338,1150],[370,1010],[408,1165],[448,1040],[482,1245],[518,1100],[560,1220],[600,1015],[630,1210],[675,1020],[710,1010],[720,1095],[752,1265],[788,880],[808,930],[830,860],[862,1110],[908,1020],[965,1210],[1020,1050],[1075,1010],[1103,1415],[1150,1105],[1172,1160],[1200,1100],[1228,1170],[1265,1020],[1290,995],[1315,865],[1350,695],[1383,930],[1395,850],[1414,270]]));
var gI = document.getElementById('ilines');
poly(gI, W, '#f0f0f0', 1.5, '7 5');
poly(gI, Y, '#dcc048', 1.5);

var gr = document.getElementById('igrid');
for (var gx = 433; gx < 2600; gx += 144.05) {
  el(gr, 'path', { d: 'M' + Math.round(gx) + ' 1165V1592', stroke: '#3a3a3a', 'stroke-width': 1, 'stroke-dasharray': '2 6', fill: 'none' });
}
el(gr, 'path', { d: 'M440 1257H2635', stroke: '#444', 'stroke-width': 2, 'stroke-dasharray': '2 5', fill: 'none' });
el(gr, 'path', { d: 'M2597 1391H2635', stroke: '#444', 'stroke-width': 2, 'stroke-dasharray': '2 5', fill: 'none' });
[1257, 1327, 1391].forEach(function (y) { el(gr, 'rect', { x: 2638, y: y - 1, width: 10, height: 2, fill: '#444' }); });

var xt = document.getElementById('xticks');
for (var tx = 628; tx < 2620; tx += 51) {
  el(xt, 'rect', { x: Math.round(tx), y: 1600, width: 1, height: 5, fill: '#555' });
}
```
